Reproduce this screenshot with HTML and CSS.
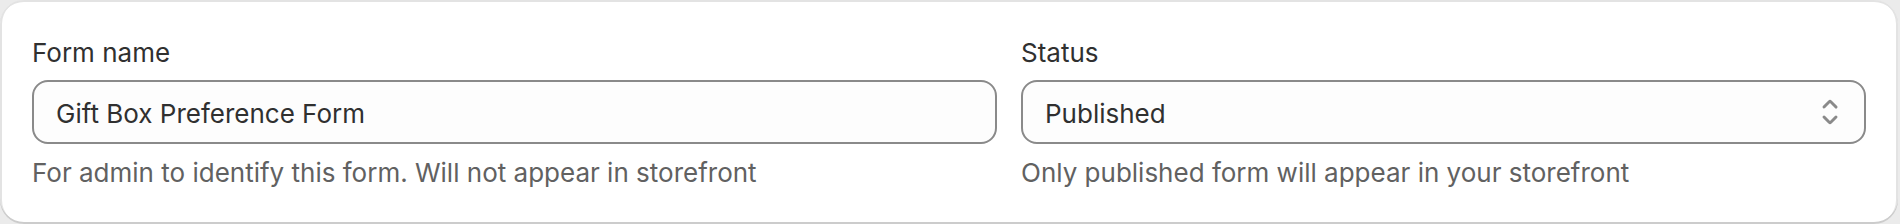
FILE: index.html
```html
<!DOCTYPE html>
<html lang="en">
<head>
<meta charset="utf-8">
<title>Form settings</title>
<link rel="stylesheet" href="styles.css">
</head>
<body>
<div class="card">
  <div class="fields">
    <div class="field">
      <label class="label" for="form-name">Form name</label>
      <div class="control">
        <input class="input" id="form-name" type="text" value="Gift Box Preference Form">
      </div>
      <p class="help">For admin to identify this form. Will not appear in storefront</p>
    </div>
    <div class="field">
      <label class="label" for="status">Status</label>
      <div class="control select-control">
        <div class="select-value" id="status">Published</div>
        <svg class="select-icon" viewBox="0 0 20 20" aria-hidden="true">
          <path d="M10.884 4.323a1.25 1.25 0 0 0-1.768 0l-2.646 2.647a.75.75 0 0 0 1.06 1.06l2.47-2.47 2.47 2.47a.75.75 0 1 0 1.06-1.06l-2.646-2.647Z"/>
          <path d="m13.53 13.03-2.646 2.647a1.25 1.25 0 0 1-1.768 0l-2.646-2.647a.75.75 0 0 1 1.06-1.06l2.47 2.47 2.47-2.47a.75.75 0 0 1 1.06 1.06Z"/>
        </svg>
      </div>
      <p class="help">Only published form will appear in your storefront</p>
    </div>
  </div>
</div>
</body>
</html>
```
FILE: styles.css
```css
* { box-sizing: border-box; }

html, body {
  margin: 0;
  padding: 0;
  background: #ebebeb;
}

body {
  font-family: Inter, "Noto Sans", "Liberation Sans", sans-serif;
  color: #303030;
  -webkit-font-smoothing: antialiased;
}

.card {
  width: 1898px;
  height: 224px;
  background: #ffffff;
  border-radius: 24px;
  padding: 32px;
  box-shadow:
    inset 0 -2px 0 0 #cccccc,
    inset 2px 0 0 0 #e3e3e3,
    inset -2px 0 0 0 #e3e3e3,
    inset 0 2px 0 0 #e3e3e3;
}

.fields {
  display: grid;
  grid-template-columns: 965fr 845fr;
  column-gap: 24px;
}

.field {
  display: flex;
  flex-direction: column;
  gap: 8px;
  min-width: 0;
}

.label {
  display: block;
  height: 40px;
  padding-top: 2px;
  font-size: 26px;
  line-height: 38px;
  color: #303030;
}

.control {
  height: 64px;
  border: 2px solid #8a8a8a;
  border-radius: 16px;
  background: #fdfdfd;
  display: flex;
  align-items: center;
}

.input {
  width: 100%;
  height: 100%;
  border: 0;
  outline: none;
  background: transparent;
  padding: 3px 22px 0;
  font: inherit;
  font-size: 26px;
  color: #303030;
}

.select-control {
  padding: 0 14px 0 22px;
  justify-content: space-between;
}

.select-value {
  padding-top: 3px;
  font-size: 26px;
  line-height: 40px;
  color: #303030;
}

.select-icon {
  width: 40px;
  height: 40px;
  fill: #8a8a8a;
  flex: none;
}

.help {
  margin: 0;
  height: 40px;
  padding-top: 2px;
  font-size: 26px;
  line-height: 38px;
  color: #616161;
}
```
